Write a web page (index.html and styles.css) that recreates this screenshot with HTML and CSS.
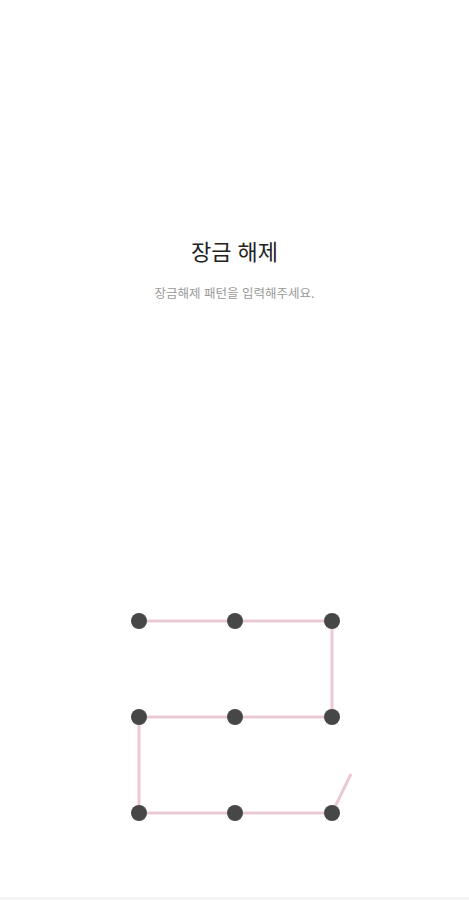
FILE: index.html
```html
<!DOCTYPE html>
<html lang="ko">
<head>
<meta charset="utf-8">
<link rel="stylesheet" href="styles.css">
</head>
<body>
<div class="screen">
  <div class="header">
    <h1 class="title">장금 해제</h1>
    <p class="subtitle">장금해제 패턴을 입력해주세요.</p>
  </div>
  <div class="pattern">
    <svg class="pattern-svg" width="260" height="240" viewBox="0 0 260 240">
      <polyline class="trail" points="34,20 130,20 227,20 227,116 130,116 34,116 34,212 130,212 227,212 246,173"/>
      <circle class="dot" cx="34" cy="20" r="8"/>
      <circle class="dot" cx="130" cy="20" r="8"/>
      <circle class="dot" cx="227" cy="20" r="8"/>
      <circle class="dot" cx="34" cy="116" r="8"/>
      <circle class="dot" cx="130" cy="116" r="8"/>
      <circle class="dot" cx="227" cy="116" r="8"/>
      <circle class="dot" cx="34" cy="212" r="8"/>
      <circle class="dot" cx="130" cy="212" r="8"/>
      <circle class="dot" cx="227" cy="212" r="8"/>
    </svg>
  </div>
  <div class="bottom"></div>
</div>
</body>
</html>
```
FILE: styles.css
```css
html, body {
  margin: 0;
  padding: 0;
  background: #ffffff;
}
.screen {
  width: 469px;
  height: 900px;
  display: flex;
  flex-direction: column;
  align-items: center;
  font-family: "Noto Sans CJK KR", "Noto Sans", sans-serif;
  overflow: hidden;
}
.header {
  padding-top: 234px;
  display: flex;
  flex-direction: column;
  align-items: center;
}
.title {
  margin: 0;
  font-size: 22px;
  font-weight: 400;
  line-height: 32px;
  color: #222222;
}
.subtitle {
  margin: 18px 0 0;
  font-size: 12.5px;
  line-height: 18px;
  color: #999999;
}
.pattern {
  margin-top: 299px;
  width: 260px;
  height: 240px;
}
.pattern-svg {
  display: block;
}
.trail {
  fill: none;
  stroke: #ebc9d3;
  stroke-width: 3;
  stroke-linejoin: miter;
}
.dot {
  fill: #474747;
}
.bottom {
  margin-top: auto;
  width: 100%;
  height: 3px;
  background: #f4f4f4;
}
```
